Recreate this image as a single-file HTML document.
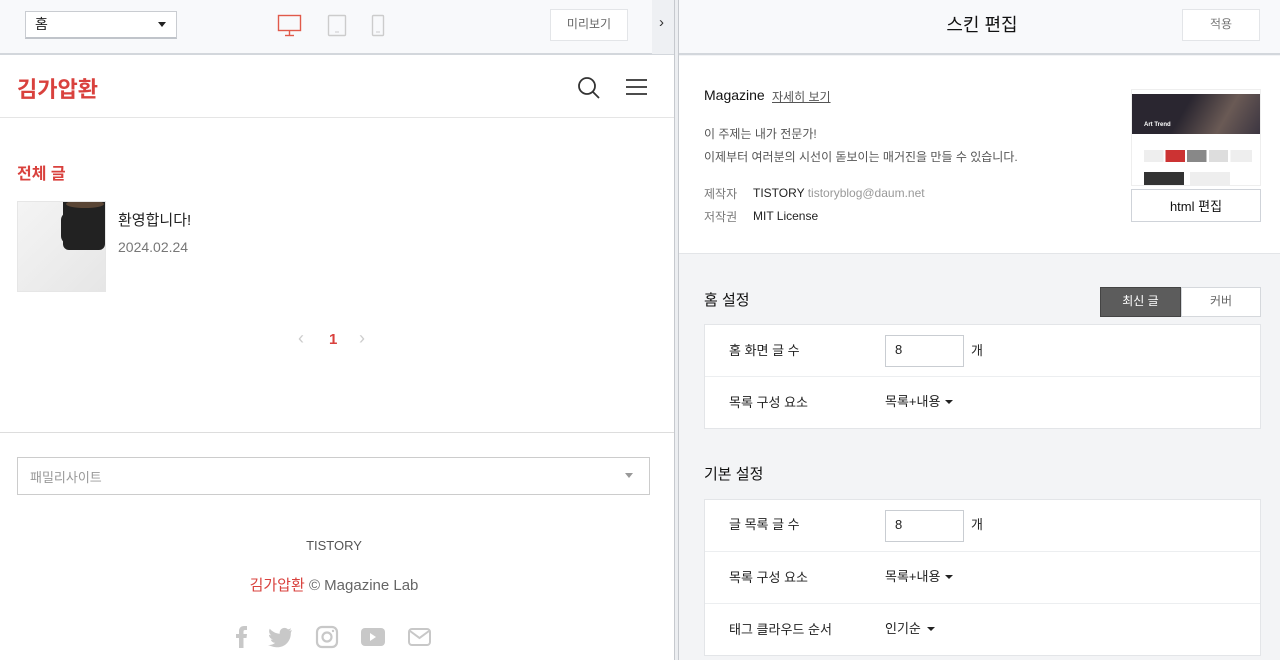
<!DOCTYPE html>
<html><head><meta charset="utf-8">
<style>
*{margin:0;padding:0;box-sizing:border-box}
body{width:1280px;height:660px;overflow:hidden;font-family:"Liberation Sans","Noto Sans CJK KR",sans-serif;background:#fff;position:relative;color:#222}
.a{position:absolute}
.t{position:absolute;white-space:nowrap}
</style></head><body>
<!-- LEFT PANEL -->
<div class="a" style="left:0;top:0;width:675px;height:55px;background:#f8f9fb;border-bottom:2px solid #d3d7dc"></div>
<div class="a" style="left:25px;top:11px;width:152px;height:28px;background:#fff;border:1px solid #c9ccd1;border-bottom:2px solid #c0c4ca"></div>
<div class="t" style="left:35px;top:14px;font-size:14px;color:#222">홈</div>
<div class="a" style="left:158px;top:22px;width:0;height:0;border-left:4px solid transparent;border-right:4px solid transparent;border-top:5px solid #222"></div>
<svg class="a" style="left:276px;top:13px" width="28" height="24"><rect x="2.5" y="2.5" width="22" height="15" fill="none" stroke="#e05a4a" stroke-width="1.4"/><line x1="13.5" y1="18" x2="13.5" y2="22" stroke="#e05a4a" stroke-width="1.4"/><line x1="9" y1="22.5" x2="18" y2="22.5" stroke="#e05a4a" stroke-width="1.4"/></svg>
<svg class="a" style="left:326px;top:13px" width="22" height="24"><rect x="2.5" y="2.5" width="17" height="20" rx="1" fill="none" stroke="#ccc" stroke-width="1.4"/><line x1="9" y1="19" x2="13" y2="19" stroke="#ccc"/></svg>
<svg class="a" style="left:370px;top:13px" width="16" height="24"><rect x="2.5" y="2.5" width="11" height="20" rx="1" fill="none" stroke="#ccc" stroke-width="1.4"/><line x1="6" y1="19" x2="10" y2="19" stroke="#ccc"/></svg>
<div class="a" style="left:550px;top:9px;width:78px;height:32px;background:#fff;border:1px solid #e3e5e8"></div>
<div class="t" style="left:550px;top:15px;width:78px;text-align:center;font-size:12px;color:#666">미리보기</div>
<div class="a" style="left:652px;top:0;width:22px;height:54px;background:#eef0f3"></div>
<div class="t" style="left:659px;top:14px;font-size:15px;color:#333">›</div>

<div class="t" style="left:17px;top:72px;font-size:22px;font-weight:bold;color:#d9413d">김가압환</div>
<svg class="a" style="left:576px;top:75px" width="26" height="26"><circle cx="11" cy="11" r="8" fill="none" stroke="#333" stroke-width="1.8"/><line x1="17" y1="17" x2="23" y2="23" stroke="#333" stroke-width="1.8"/></svg>
<svg class="a" style="left:626px;top:78px" width="22" height="20"><g stroke="#333" stroke-width="1.8"><line x1="0" y1="2" x2="21" y2="2"/><line x1="0" y1="9" x2="21" y2="9"/><line x1="0" y1="16" x2="21" y2="16"/></g></svg>
<div class="a" style="left:0;top:117px;width:675px;height:1px;background:#e5e5e5"></div>

<div class="t" style="left:17px;top:160px;font-size:16px;font-weight:bold;color:#d9413d">전체 글</div>
<div class="a" style="left:17px;top:201px;width:89px;height:91px;background:linear-gradient(135deg,#f4f4f4,#e6e6e6);border:1px solid #e6e6e6;overflow:hidden">
<div class="a" style="left:45px;top:-6px;width:42px;height:54px;background:#222;border-radius:0 0 6px 6px"></div>
<div class="a" style="left:48px;top:-2px;width:38px;height:8px;background:#5a4636;border-radius:50%"></div>
<div class="a" style="left:43px;top:10px;width:14px;height:32px;border:5px solid #222;border-radius:8px 0 0 8px;border-right:none"></div>
</div>
<div class="t" style="left:118px;top:209px;font-size:15px;color:#222">환영합니다!</div>
<div class="t" style="left:118px;top:239px;font-size:14px;color:#777">2024.02.24</div>

<div class="t" style="left:298px;top:328px;font-size:18px;color:#ccc">‹</div>
<div class="t" style="left:329px;top:331px;font-size:15px;font-weight:bold;color:#d9413d">1</div>
<div class="t" style="left:359px;top:328px;font-size:18px;color:#ccc">›</div>

<div class="a" style="left:0;top:432px;width:675px;height:1px;background:#ddd"></div>
<div class="a" style="left:17px;top:457px;width:633px;height:38px;border:1px solid #ccc;background:#fff"></div>
<div class="t" style="left:30px;top:467px;font-size:13px;color:#999">패밀리사이트</div>
<div class="a" style="left:625px;top:473px;border-left:4px solid transparent;border-right:4px solid transparent;border-top:5px solid #999"></div>
<div class="t" style="left:0;top:538px;width:668px;text-align:center;font-size:13px;color:#555">TISTORY</div>
<div class="t" style="left:0;top:574px;width:668px;text-align:center;font-size:15px;color:#666"><span style="color:#d9413d">김가압환</span> © Magazine Lab</div>
<svg class="a" style="left:230px;top:624px" width="210" height="28" fill="#c8c8c8">
<path d="M9 24V14H6v-4h3V7c0-3 2-5 5-5h3v4h-2c-1 0-1.5.5-1.5 1.5V10h3.5l-.5 4h-3v10z"/>
<path d="M62 6c-1 .5-2 .7-3 .8 1-.6 2-1.6 2-2.6-1 .6-2 1-3 1.2-1-1-2.2-1.5-3.5-1.5-2.7 0-4.8 2.2-4.8 4.8 0 .4 0 .8.1 1.1-4-.2-7.6-2.1-10-5-.4.7-.7 1.600-.7 2.400 0 1.700.9 3.200 2.100 4-.8 0-1.500-.2-2.200-.6 0 2.400 1.700 4.300 3.900 4.800-.7.2-1.500.2-2.200.1.6 1.900 2.400 3.300 4.500 3.400-2.100 1.600-4.700 2.400-7.200 2.100C42 22.500 44.500 23.300 47.200 23.300c8.800 0 13.600-7.300 13.600-13.600v-.6C61 8 61.600 7 62 6z"/>
<rect x="87" y="3" width="20" height="20" rx="5" fill="none" stroke="#c8c8c8" stroke-width="2.2"/><circle cx="97" cy="13" r="4.5" fill="none" stroke="#c8c8c8" stroke-width="2.2"/><circle cx="103" cy="7" r="1.2"/>
<rect x="131" y="4" width="24" height="18" rx="4"/><path d="M140 9v8l6-4z" fill="#fff"/>
<rect x="179" y="5" width="21" height="16" rx="3" fill="none" stroke="#c8c8c8" stroke-width="2"/><path d="M180 7l9.5 7 9.5-7" fill="none" stroke="#c8c8c8" stroke-width="2"/>
</svg>

<!-- divider -->
<div class="a" style="left:674px;top:0;width:5px;height:660px;background:#eceef1;border-left:1px solid #c6c9ce;border-right:1px solid #c6c9ce"></div>

<!-- RIGHT PANEL -->
<div class="a" style="left:679px;top:0;width:601px;height:660px;background:#f3f4f6"></div>
<div class="a" style="left:679px;top:0;width:601px;height:55px;background:#f8f9fb;border-bottom:2px solid #d3d7dc"></div>
<div class="t" style="left:679px;top:11px;width:606px;text-align:center;font-size:18px;color:#111">스킨 편집</div>
<div class="a" style="left:1182px;top:9px;width:78px;height:32px;background:#fff;border:1px solid #e3e5e8"></div>
<div class="t" style="left:1182px;top:15px;width:78px;text-align:center;font-size:12px;color:#777">적용</div>

<div class="a" style="left:679px;top:56px;width:601px;height:198px;background:#fff;border-bottom:1px solid #e3e5e8"></div>
<div class="t" style="left:704px;top:87px;font-size:14px;color:#111">Magazine</div>
<div class="t" style="left:772px;top:88px;font-size:12px;color:#555;text-decoration:underline">자세히 보기</div>
<div class="t" style="left:704px;top:123px;font-size:12px;color:#555;line-height:23px">이 주제는 내가 전문가!<br>이제부터 여러분의 시선이 돋보이는 매거진을 만들 수 있습니다.</div>
<div class="t" style="left:704px;top:185px;font-size:12px;color:#777">제작자</div>
<div class="t" style="left:753px;top:186px;font-size:12px;color:#222">TISTORY <span style="color:#999">tistoryblog@daum.net</span></div>
<div class="t" style="left:704px;top:208px;font-size:12px;color:#777">저작권</div>
<div class="t" style="left:753px;top:209px;font-size:12px;color:#222">MIT License</div>

<div class="a" style="left:1131px;top:89px;width:130px;height:97px;background:#fff;border:1px solid #eee;overflow:hidden">
<div class="a" style="left:0;top:4px;width:130px;height:40px;background:linear-gradient(120deg,#2a2630 40%,#6a5a55 70%,#3a3440)"></div>
<div class="t" style="left:12px;top:32px;font-size:6px;color:#fff;font-weight:bold">Art Trend</div>
<div class="a" style="left:12px;top:60px;width:108px;height:12px;background:linear-gradient(90deg,#eee 0 18%,#fff 18% 20%,#c33 20% 38%,#fff 38% 40%,#888 40% 58%,#fff 58% 60%,#ddd 60% 78%,#fff 78% 80%,#eee 80%)"></div>
<div class="a" style="left:12px;top:82px;width:40px;height:15px;background:#333"></div>
<div class="a" style="left:58px;top:82px;width:40px;height:15px;background:#eee"></div>
</div>
<div class="a" style="left:1131px;top:189px;width:130px;height:33px;background:#fff;border:1px solid #cfd3d9"></div>
<div class="t" style="left:1131px;top:196px;width:130px;text-align:center;font-size:13px;color:#111">html 편집</div>

<div class="t" style="left:704px;top:289px;font-size:15px;color:#111">홈 설정</div>
<div class="a" style="left:1100px;top:287px;width:81px;height:30px;background:#5c5c5c;border:1px solid #444"></div>
<div class="t" style="left:1100px;top:292px;width:81px;text-align:center;font-size:12px;color:#fff">최신 글</div>
<div class="a" style="left:1181px;top:287px;width:80px;height:30px;background:#fff;border:1px solid #d5d8dc"></div>
<div class="t" style="left:1181px;top:292px;width:80px;text-align:center;font-size:12px;color:#666">커버</div>

<div class="a" style="left:704px;top:324px;width:557px;height:105px;background:#fff;border:1px solid #e3e5e8"></div>
<div class="a" style="left:705px;top:376px;width:555px;height:1px;background:#eceef0"></div>
<div class="t" style="left:729px;top:340px;font-size:13px;color:#222">홈 화면 글 수</div>
<div class="a" style="left:885px;top:335px;width:79px;height:32px;border:1px solid #c9cdd2;background:#fff"></div>
<div class="t" style="left:895px;top:342px;font-size:13px;color:#222">8</div>
<div class="t" style="left:971px;top:340px;font-size:13px;color:#222">개</div>
<div class="t" style="left:729px;top:392px;font-size:13px;color:#222">목록 구성 요소</div>
<div class="t" style="left:885px;top:391px;font-size:13px;color:#222">목록+내용</div>
<div class="a" style="left:945px;top:400px;border-left:4px solid transparent;border-right:4px solid transparent;border-top:4px solid #222"></div>

<div class="t" style="left:704px;top:463px;font-size:15px;color:#111">기본 설정</div>
<div class="a" style="left:704px;top:499px;width:557px;height:157px;background:#fff;border:1px solid #e3e5e8"></div>
<div class="a" style="left:705px;top:551px;width:555px;height:1px;background:#eceef0"></div>
<div class="a" style="left:705px;top:603px;width:555px;height:1px;background:#eceef0"></div>
<div class="t" style="left:729px;top:514px;font-size:13px;color:#222">글 목록 글 수</div>
<div class="a" style="left:885px;top:510px;width:79px;height:32px;border:1px solid #c9cdd2;background:#fff"></div>
<div class="t" style="left:895px;top:517px;font-size:13px;color:#222">8</div>
<div class="t" style="left:971px;top:514px;font-size:13px;color:#222">개</div>
<div class="t" style="left:729px;top:567px;font-size:13px;color:#222">목록 구성 요소</div>
<div class="t" style="left:885px;top:566px;font-size:13px;color:#222">목록+내용</div>
<div class="a" style="left:945px;top:575px;border-left:4px solid transparent;border-right:4px solid transparent;border-top:4px solid #222"></div>
<div class="t" style="left:729px;top:619px;font-size:13px;color:#222">태그 클라우드 순서</div>
<div class="t" style="left:885px;top:618px;font-size:13px;color:#222">인기순</div>
<div class="a" style="left:927px;top:627px;border-left:4px solid transparent;border-right:4px solid transparent;border-top:4px solid #222"></div>
</body></html>
